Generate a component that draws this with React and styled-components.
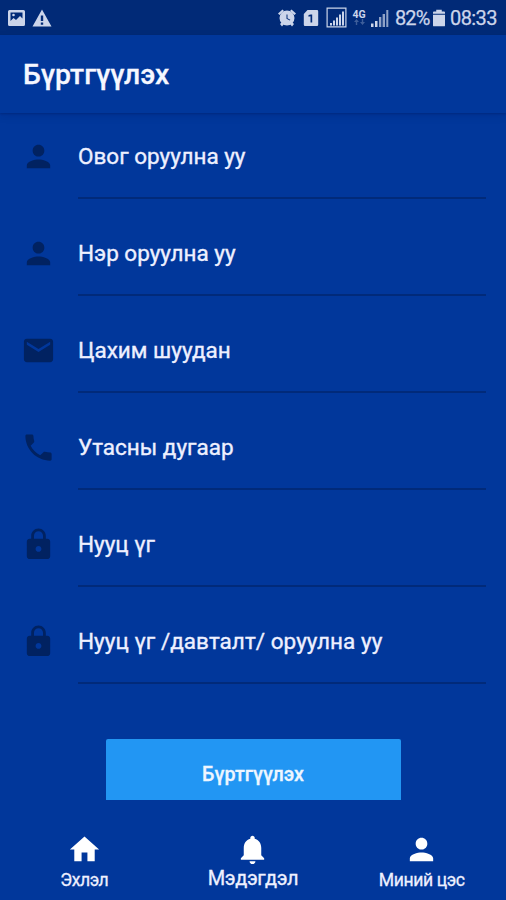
import React from "react";
import styled, { createGlobalStyle } from "styled-components";

const GlobalStyle = createGlobalStyle`
  * { box-sizing: border-box; }
  body { margin: 0; background: #01379b; }
`;

const Screen = styled.div`
  width: 506px;
  height: 900px;
  display: flex;
  flex-direction: column;
  overflow: hidden;
  background: #01379b;
  color: #eef0ff;
  font-family: Roboto, sans-serif;
`;

const StatusBar = styled.div`
  height: 35px;
  flex: none;
  display: flex;
  align-items: center;
  background: #012a77;
  color: #ccd5ea;
  padding: 0 9px 0 7px;
`;

const StatusGlyph = styled.svg`
  flex: none;
  display: block;
  width: ${(p) => p.$w}px;
  height: ${(p) => p.$h}px;
  margin-left: ${(p) => p.$gap || 0}px;
  fill: currentColor;
`;

const StatusSpacer = styled.div`
  flex: 1;
`;

const StatusText = styled.span`
  width: ${(p) => p.$w}px;
  margin-left: ${(p) => p.$gap}px;
  font-size: 20px;
  line-height: 35px;
  padding-top: 1px;
  letter-spacing: ${(p) => p.$track}px;
  white-space: nowrap;
  -webkit-text-stroke: 0.25px currentColor;
`;

const Network = styled.div`
  width: 14px;
  margin-left: 5px;
  font-size: 10.5px;
  line-height: 9px;
  font-weight: 700;
  display: flex;
  flex-direction: column;
  align-items: center;
`;

const Header = styled.header`
  height: 78px;
  flex: none;
  padding-left: 23px;
  box-shadow: 0 1px 2px rgba(0, 15, 80, 0.3), 0 3px 8px rgba(0, 15, 80, 0.12);
`;

const Title = styled.h1`
  margin: 0;
  font-size: 28.3px;
  line-height: 80px;
  font-weight: 500;
  color: #f6f7ff;
  -webkit-text-stroke: 0.3px currentColor;
`;

const Form = styled.form`
  display: flex;
  flex-direction: column;
  padding: 0 20px 0 21px;
  height: 688px;
  flex: none;
`;

const Field = styled.label`
  display: grid;
  grid-template-columns: 35px 408px;
  column-gap: 22px;
  height: 97.1px;
  flex: none;
`;

const FieldIcon = styled.svg`
  width: 35px;
  height: 35px;
  margin-top: 26px;
  fill: #012261;
`;

const FieldText = styled.span`
  height: 86px;
  border-bottom: 2px solid #012a7a;
  font-size: 22.5px;
  line-height: 87px;
  letter-spacing: ${(p) => p.$track}px;
  white-space: nowrap;
  -webkit-text-stroke: 0.35px currentColor;
`;

const Submit = styled.button`
  width: 295px;
  height: 61px;
  flex: none;
  margin: 43.4px 0 0 85px;
  padding: 10px 1px 0 0;
  border: 0;
  border-radius: 2px 2px 0 0;
  background: #2296f3;
  color: #eef6ff;
  font: 500 19.7px/51px Roboto, sans-serif;
  -webkit-text-stroke: 0.3px currentColor;
`;

const TabBar = styled.nav`
  display: grid;
  grid-template-columns: repeat(3, 1fr);
  flex: 1;
  padding-top: 31px;
`;

const Tab = styled.a`
  display: flex;
  flex-direction: column;
  align-items: center;
`;

const TabIcon = styled.svg`
  width: 35px;
  height: 35px;
  fill: #fff;
`;

const TabLabel = styled.span`
  font-size: ${(p) => p.$size}px;
  line-height: 24px;
  margin-top: ${(p) => p.$top}px;
  letter-spacing: ${(p) => p.$track}px;
  white-space: nowrap;
  -webkit-text-stroke: 0.3px currentColor;
`;

const paths = {
  person: "M12 12c2.21 0 4-1.79 4-4s-1.79-4-4-4-4 1.79-4 4 1.79 4 4 4zm0 2c-2.67 0-8 1.34-8 4v2h16v-2c0-2.66-5.33-4-8-4z",
  mail: "M20 4H4c-1.1 0-1.99.9-1.99 2L2 18c0 1.1.9 2 2 2h16c1.1 0 2-.9 2-2V6c0-1.1-.9-2-2-2zm0 4l-8 5-8-5V6l8 5 8-5v2z",
  phone: "M6.62 10.79c1.44 2.83 3.76 5.14 6.59 6.59l2.2-2.2c.27-.27.67-.36 1.02-.24 1.12.37 2.33.57 3.57.57.55 0 1 .45 1 1V20c0 .55-.45 1-1 1-9.39 0-17-7.61-17-17 0-.55.45-1 1-1h3.5c.55 0 1 .45 1 1 0 1.25.2 2.45.57 3.57.11.35.03.74-.25 1.02l-2.2 2.2z",
  lock: "M18 8h-1V6c0-2.76-2.24-5-5-5S7 3.24 7 6v2H6c-1.1 0-2 .9-2 2v10c0 1.1.9 2 2 2h12c1.1 0 2-.9 2-2V10c0-1.1-.9-2-2-2zm-6 9c-1.1 0-2-.9-2-2s.9-2 2-2 2 .9 2 2-.9 2-2 2zm3.1-9H8.9V6c0-1.71 1.39-3.1 3.1-3.1 1.71 0 3.1 1.39 3.1 3.1v2z",
  home: "M10 20v-6h4v6h5v-8h3L12 3 2 12h3v8z",
  bell: "M12 22c1.1 0 2-.9 2-2h-4c0 1.1.89 2 2 2zm6-6v-5c0-3.07-1.64-5.64-4.5-6.32V4c0-.83-.67-1.5-1.5-1.5s-1.5.67-1.5 1.5v.68C7.63 5.36 6 7.92 6 11v5l-2 2v1h16v-1l-2-2z",
};

const fields = [
  { icon: "person", text: "Овог оруулна уу", track: 0 },
  { icon: "person", text: "Нэр оруулна уу", track: 0 },
  { icon: "mail", text: "Цахим шуудан", track: 0 },
  { icon: "phone", text: "Утасны дугаар", track: 0 },
  { icon: "lock", text: "Нууц үг", track: 0 },
  { icon: "lock", text: "Нууц үг /давталт/ оруулна уу", track: 0.04 },
];

const tabs = [
  { icon: "home", text: "Эхлэл", size: 17.6, top: 1, track: -0.45 },
  { icon: "bell", text: "Мэдэгдэл", size: 20, top: -1, track: -0.3 },
  { icon: "person", text: "Миний цэс", size: 17.6, top: 1, track: -0.4 },
];

function Status() {
  return (
    <StatusBar>
      <StatusGlyph $w={19} $h={18} viewBox="0 0 19 18">
        <path fillRule="evenodd" d="M2.5 1h14a1.5 1.5 0 0 1 1.5 1.5v13a1.5 1.5 0 0 1-1.5 1.5h-14A1.5 1.5 0 0 1 1 15.5v-13A1.5 1.5 0 0 1 2.5 1zM3.500 3.500v8.500l3-3 2.500 2 4-4 2.500 2.500v-6z" />
        <circle cx="6.500" cy="6" r="1.300" />
      </StatusGlyph>
      <StatusGlyph $w={20} $h={18} $gap={6} viewBox="0 0 20 18">
        <path fillRule="evenodd" d="M10 .5L19.500 17.500H.5zM8.800 6.500V12h2.400V6.500zM8.800 13.500v2.200h2.400v-2.200z" />
      </StatusGlyph>
      <StatusSpacer />
      <StatusGlyph $w={18} $h={18} viewBox="0 0 18 18">
        <path d="M0 4.500L4.500.5 6 2 1.500 6zM18 4.500L13.500.5 12 2l4.500 4zM2 15l2-2 2 2-2 2.500zM16 15l-2-2-2 2 2 2.500z" />
        <path fillRule="evenodd" d="M9 1.500a7.500 7.500 0 1 0 0 15 7.500 7.500 0 0 0 0-15zM8.500 5.500v4.300l3.400 1.700.4-.8-2.800-1.500V5.500z" />
      </StatusGlyph>
      <StatusGlyph $w={16} $h={18} $gap={7} viewBox="0 0 16 18">
        <path fillRule="evenodd" d="M4.500 1H14a1.200 1.200 0 0 1 1.200 1.200v13.600A1.200 1.200 0 0 1 14 17H2a1.200 1.200 0 0 1-1.200-1.200V5zM5.500 6v1.700l2-.5V13.500h1.700V5.500H7.700z" />
      </StatusGlyph>
      <StatusGlyph $w={21} $h={21} $gap={7} viewBox="0 0 21 21">
        <path fillRule="evenodd" d="M.5.5h20v20H.5zM1.700 1.700v17.600h17.600V1.700z" />
        <path d="M4 16h2v2.500H4zM7 13.500h2v5H7zM10 10.500h2v8h-2zM13 7.500h2v11h-2zM16 4.500h2v14h-2z" />
      </StatusGlyph>
      <Network>
        4G
        <StatusGlyph $w={11} $h={7} viewBox="0 0 11 7" opacity="0.3">
          <path d="M0 3L2.500 0 5 3H3.200v3H1.800V3zM6 3h1.800V0h1.400v3H11L8.500 6z" />
        </StatusGlyph>
      </Network>
      <StatusGlyph $w={18} $h={18} $gap={5} viewBox="0 0 18 18">
        <path d="M0 14.500h2.500V18H0zM4 12h2.500v6H4z" />
        <path d="M8 8h2.300v10H8zM11.600 5H14v13h-2.400zM15.300 1h2v17h-2z" opacity=".7" />
      </StatusGlyph>
      <StatusText $w={34} $gap={6} $track={-0.9}>82%</StatusText>
      <StatusGlyph $w={12} $h={18} $gap={4} viewBox="0 0 13 18">
        <path d="M3.500 0h6v2H12a1 1 0 0 1 1 1v1.500H0V3a1 1 0 0 1 1-1h2.500zM0 5.500h13V17a1 1 0 0 1-1 1H1a1 1 0 0 1-1-1z" />
      </StatusGlyph>
      <StatusText $w={47} $gap={5} $track={-0.6}>08:33</StatusText>
    </StatusBar>
  );
}

export default function App() {
  return (
    <Screen>
      <GlobalStyle />
      <Status />
      <Header>
        <Title>Бүртгүүлэх</Title>
      </Header>
      <Form>
        {fields.map((f) => (
          <Field key={f.text}>
            <FieldIcon viewBox="0 0 24 24"><path d={paths[f.icon]} /></FieldIcon>
            <FieldText $track={f.track}>{f.text}</FieldText>
          </Field>
        ))}
        <Submit type="button">Бүртгүүлэх</Submit>
      </Form>
      <TabBar>
        {tabs.map((t) => (
          <Tab key={t.text}>
            <TabIcon viewBox="0 0 24 24"><path d={paths[t.icon]} /></TabIcon>
            <TabLabel $size={t.size} $top={t.top} $track={t.track}>{t.text}</TabLabel>
          </Tab>
        ))}
      </TabBar>
    </Screen>
  );
}
